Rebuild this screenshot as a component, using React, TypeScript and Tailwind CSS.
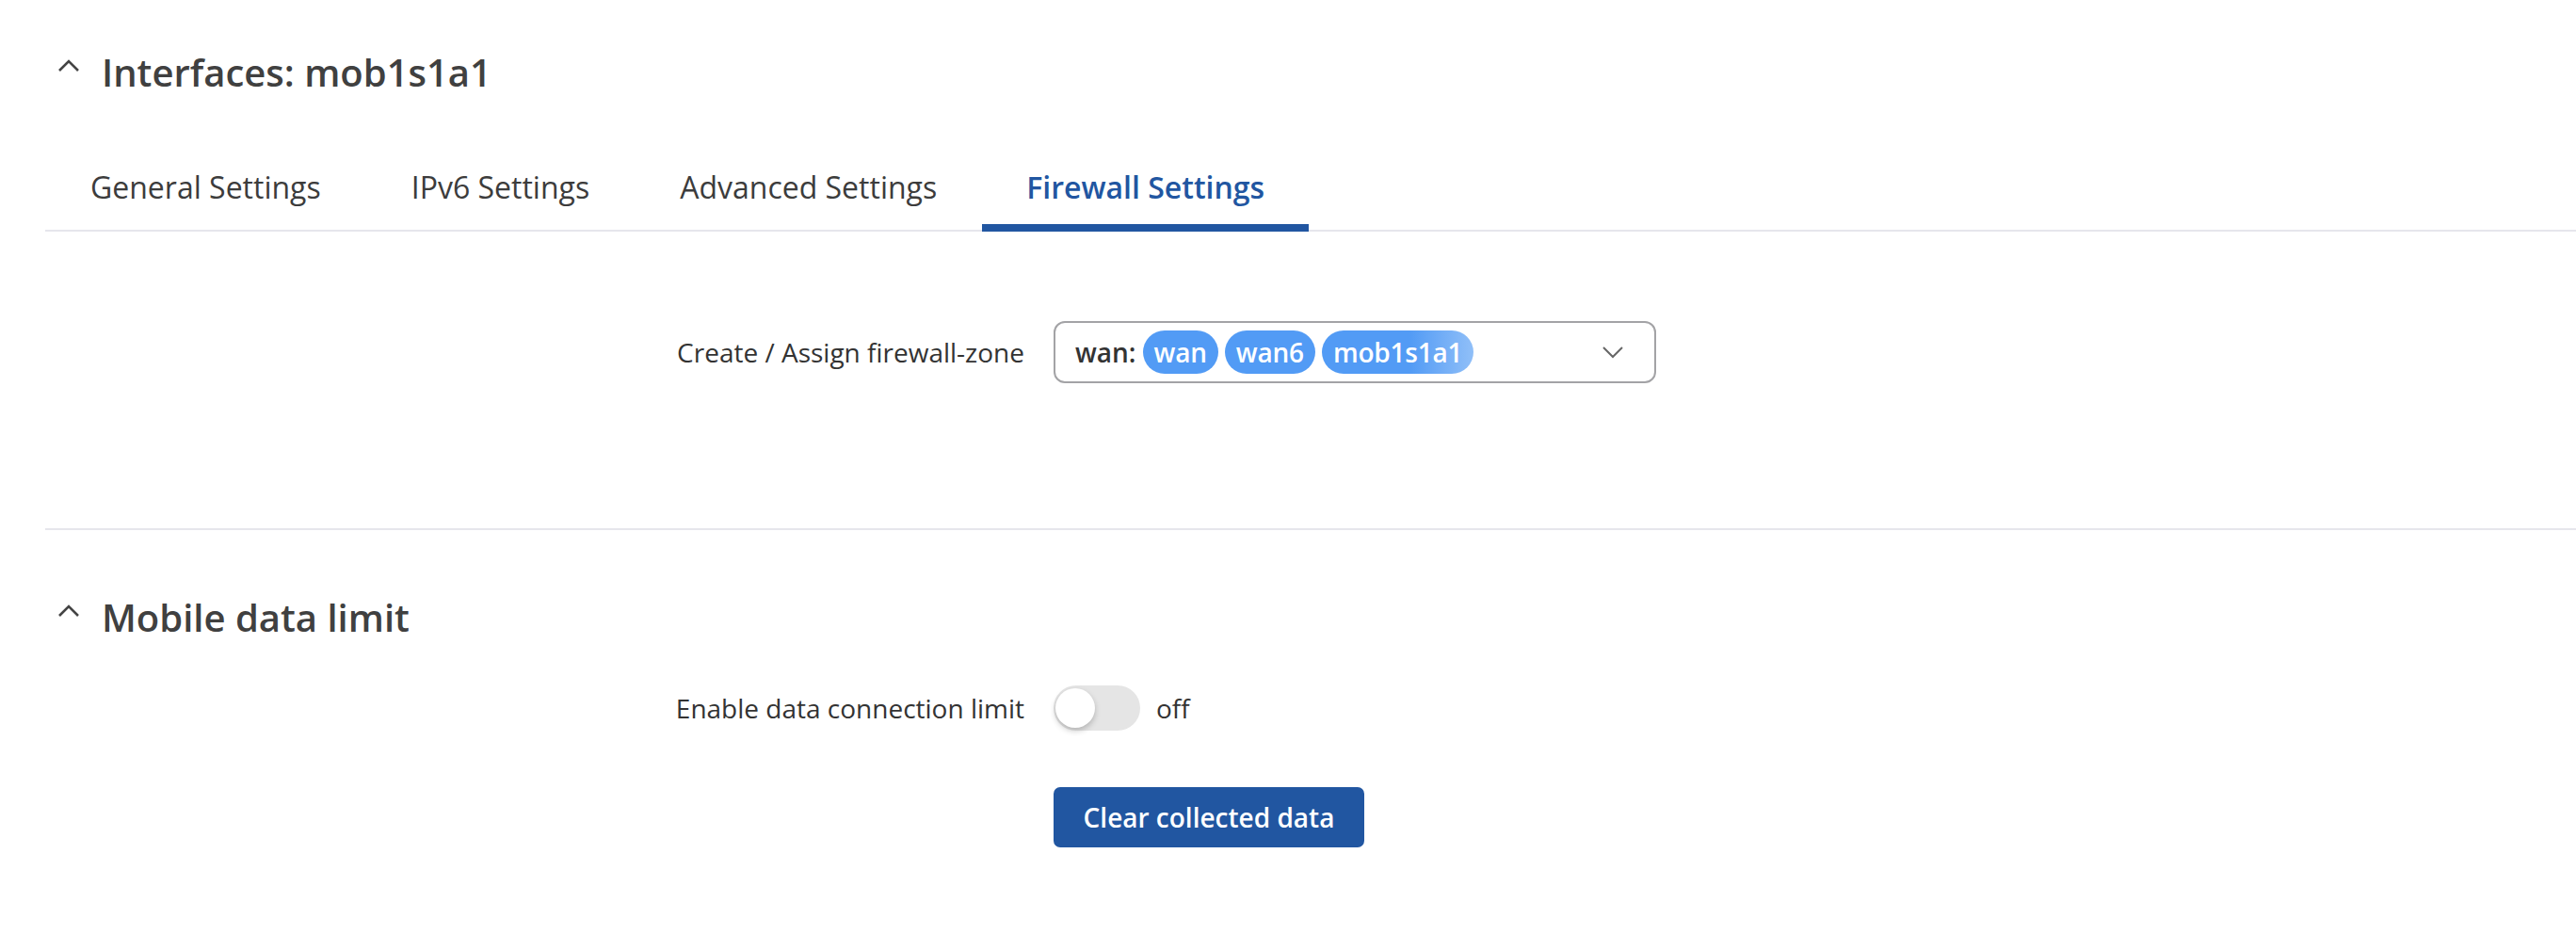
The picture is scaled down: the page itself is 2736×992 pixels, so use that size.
const tabs = ["General Settings", "IPv6 Settings", "Advanced Settings", "Firewall Settings"];

function ChevronUp() {
  return (
    <svg width="24" height="14" viewBox="0 0 24 14" className="mb-[14px] shrink-0">
      <polyline points="2,12 12,2 22,12" fill="none" stroke="#444" strokeWidth="2.6" />
    </svg>
  );
}

function SectionTitle({ title }: { title: string }) {
  return (
    <div className="flex h-[56px] items-center gap-[23px] pl-[13px]">
      <ChevronUp />
      <h2 className="text-[40px] font-semibold leading-[56px] text-[#404040]">{title}</h2>
    </div>
  );
}

function Pill({ label, fade }: { label: string; fade?: boolean }) {
  return (
    <span
      className={
        fade
          ? "flex h-[46px] items-center rounded-full bg-[linear-gradient(90deg,#529bf5_0%,#529bf5_58%,#90bff8_100%)] px-[12px] text-[28px] font-semibold tracking-[-0.2px] text-white"
          : "flex h-[46px] items-center rounded-full bg-[#529bf5] px-[12px] text-[28px] font-semibold tracking-[-0.2px] text-white"
      }
    >
      {label}
    </span>
  );
}

function FormRow({ label, children }: { label: string; children: React.ReactNode }) {
  return (
    <div className="flex items-center gap-[31px]">
      <div className="w-[1040px] shrink-0 text-right text-[28px] leading-[40px] text-[#333]">{label}</div>
      {children}
    </div>
  );
}

export default function App() {
  return (
    <main className="min-h-[992px] bg-white font-['Open_Sans',sans-serif] text-[#333]">
      <section className="ml-[48px] border-b-2 border-[#e6e6ec] pt-[49px] pb-[154px]">
        <SectionTitle title="Interfaces: mob1s1a1" />

        <nav className="mt-[47px] flex border-b-2 border-[#e6e6ec]">
          {tabs.map((tab) => {
            const active = tab === "Firewall Settings";
            return (
              <div
                key={tab}
                className={
                  active
                    ? "-mb-[2px] border-b-[8px] border-[#2156a1] px-[47px] pt-[25px] pb-[17px] text-[32px] font-semibold leading-[44px] text-[#2156a1]"
                    : "-mb-[2px] border-b-[8px] border-transparent px-[48px] pt-[25px] pb-[17px] text-[32px] leading-[44px] text-[#3c3c3c]"
                }
              >
                {tab}
              </div>
            );
          })}
        </nav>

        <div className="mt-[95px]">
          <FormRow label="Create / Assign firewall-zone">
            <div className="flex h-[66px] w-[640px] items-center rounded-[12px] border-2 border-[#a3a3a6] pr-[32px] pl-[21px]">
              <span className="text-[28px] font-semibold text-[#333]">wan:</span>
              <div className="ml-[7px] flex gap-[7px]">
                <Pill label="wan" />
                <Pill label="wan6" />
                <Pill label="mob1s1a1" fade />
              </div>
              <svg width="24" height="14" viewBox="0 0 24 14" className="ml-auto">
                <polyline points="2,2 12,12 22,2" fill="none" stroke="#666" strokeWidth="2" />
              </svg>
            </div>
          </FormRow>
        </div>
      </section>

      <section className="ml-[48px] pt-[65px]">
        <SectionTitle title="Mobile data limit" />

        <div className="mt-[44px]">
          <FormRow label="Enable data connection limit">
            <div className="flex items-center gap-[17px]">
              <div className="flex h-[48px] w-[92px] items-center rounded-full bg-[#e5e5e5] pl-[2px]">
                <span className="h-[42px] w-[42px] rounded-full bg-white shadow-[0_3px_6px_rgba(0,0,0,0.22)]" />
              </div>
              <span className="text-[28px] leading-[40px] text-[#333]">off</span>
            </div>
          </FormRow>
        </div>

        <div className="mt-[60px] pl-[1071px]">
          <button className="h-[64px] w-[330px] rounded-[7px] bg-[#2156a1] text-[28px] font-semibold text-white">
            Clear collected data
          </button>
        </div>
      </section>
    </main>
  );
}
